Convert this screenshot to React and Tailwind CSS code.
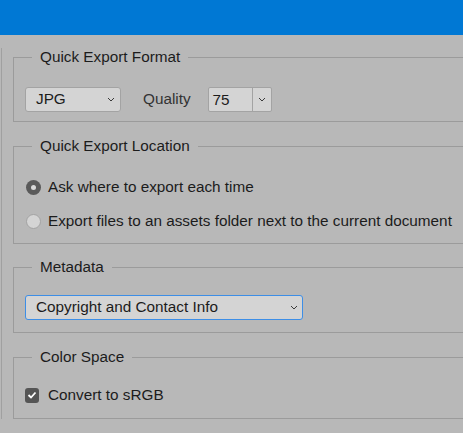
import React from 'react';

// ─── Small drawn bits ─────────────────────────────────────────────────────────
function Chevron() {
  return (
    <svg width="8" height="5" viewBox="0 0 8 5" className="shrink-0">
      <path d="M1 1 L4 4 L7 1" fill="none" stroke="#3a3a3a" strokeWidth="1" />
    </svg>
  );
}

function Group({ title, className = '', children }) {
  return (
    <fieldset className={`ml-[13px] w-[470px] border border-[#9b9b9b] pl-[11px] ${className}`}>
      <legend className="ml-[7px] px-[8px] h-[20px] leading-[20px] text-[15.3px] text-[#1c1c1c]">
        {title}
      </legend>
      {children}
    </fieldset>
  );
}

function Radio({ checked, label }) {
  return (
    <div className="flex items-center h-[20px]">
      {checked ? (
        <span className="ml-[1px] w-[15px] h-[15px] rounded-full bg-[#5a5a5a] flex items-center justify-center">
          <span className="w-[5px] h-[5px] rounded-full bg-[#d8d8d8]" />
        </span>
      ) : (
        <span className="ml-[1px] w-[15px] h-[15px] rounded-full bg-[#d4d4d4] border border-[#a3a3a3]" />
      )}
      <span className="ml-[7px] text-[15.3px] text-[#1c1c1c]">{label}</span>
    </div>
  );
}

export default function App() {
  return (
    <div
      className="w-[463px] h-[433px] overflow-hidden bg-[#b8b8b8]"
      style={{ fontFamily: '"Liberation Sans", Arial, sans-serif' }}
    >
      <div className="h-[35px] bg-[#0078d4]" />

      <div className="relative pt-[12px]">
        <div className="absolute left-[1px] top-[13px] bottom-0 w-px bg-[#a0a0a0]" />

        {/* Quick Export Format */}
        <Group title="Quick Export Format" className="pb-[9px]">
          <div className="mt-[20px] flex items-center">
            <div className="w-[96px] h-[25px] rounded-[3px] border border-[#a3a3a3] bg-[#d4d4d4] flex items-center justify-between pl-[10px] pr-[5px]">
              <span className="text-[15.3px] text-[#1c1c1c]">JPG</span>
              <Chevron />
            </div>
            <span className="ml-[22px] text-[15.3px] text-[#333]">Quality</span>
            <div className="ml-[17px] w-[64px] h-[25px] rounded-[2px] border border-[#a3a3a3] bg-[#d4d4d4] flex items-stretch">
              <span className="flex-1 pl-[4px] text-[15.3px] leading-[23px] text-[#1c1c1c]">75</span>
              <span className="w-[19px] border-l border-[#a3a3a3] flex items-center justify-center">
                <Chevron />
              </span>
            </div>
          </div>
        </Group>

        {/* Quick Export Location */}
        <Group title="Quick Export Location" className="mt-[14px] pb-[12px]">
          <div className="mt-[21px] flex flex-col gap-[14px]">
            <Radio checked label="Ask where to export each time" />
            <Radio label="Export files to an assets folder next to the current document" />
          </div>
        </Group>

        {/* Metadata */}
        <Group title="Metadata" className="mt-[13px] pb-[12px]">
          <div className="mt-[18px] w-[278px] h-[25px] rounded-[3px] border border-[#3d8ee6] bg-[#d4d4d4] flex items-center justify-between pl-[10px] pr-[4px]">
            <span className="text-[15.3px] text-[#1c1c1c]">Copyright and Contact Info</span>
            <Chevron />
          </div>
        </Group>

        {/* Color Space */}
        <Group title="Color Space" className="mt-[14px] pb-[13px]">
          <div className="mt-[18px] flex items-center h-[20px]">
            <span className="w-[14px] h-[15px] rounded-[3px] bg-[#555555] flex items-center justify-center">
              <svg width="10" height="8" viewBox="0 0 10 8">
                <path d="M1.5 4 L4 6.5 L8.5 1.5" fill="none" stroke="#ffffff" strokeWidth="1.8" />
              </svg>
            </span>
            <span className="ml-[9px] text-[15.3px] text-[#1c1c1c]">Convert to sRGB</span>
          </div>
        </Group>
      </div>
    </div>
  );
}
